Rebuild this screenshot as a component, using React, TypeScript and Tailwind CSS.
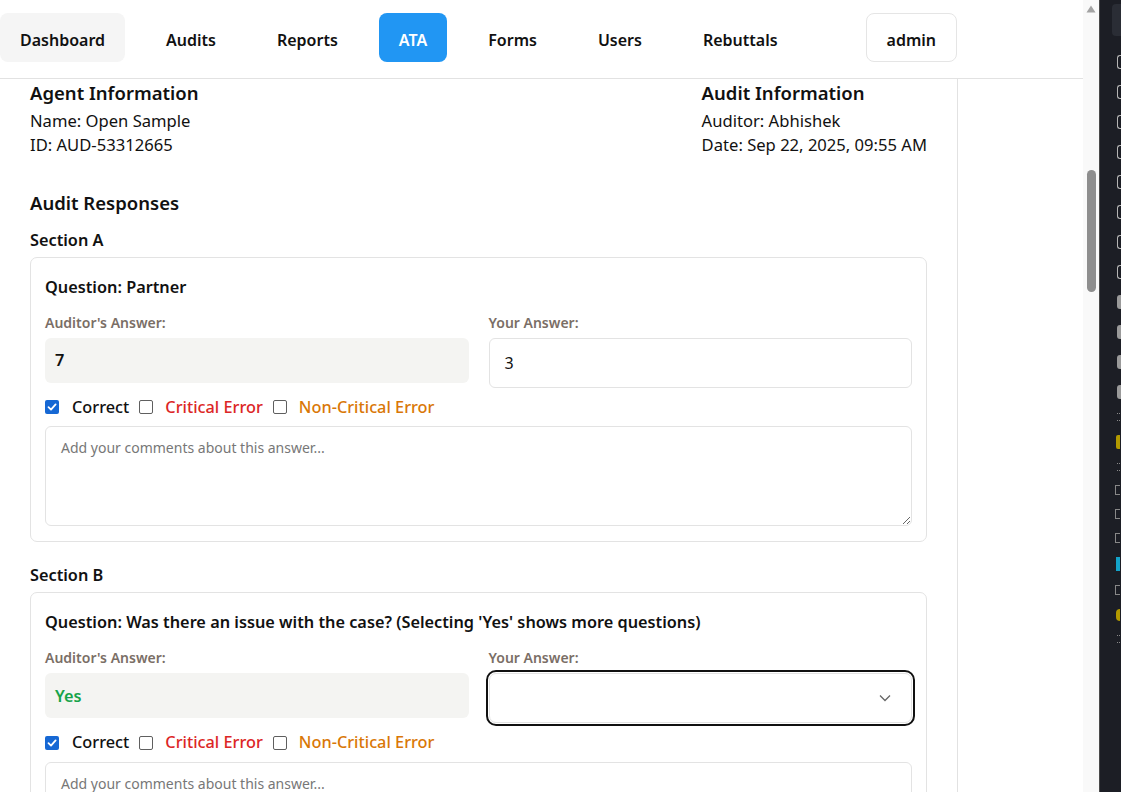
import React from 'react';

const navItems = ['Dashboard', 'Audits', 'Reports', 'ATA', 'Forms', 'Users', 'Rebuttals'];

const Box = ({ checked }: { checked?: boolean }) =>
  checked ? (
    <span className="flex h-[14px] w-[14px] shrink-0 items-center justify-center rounded-[2px] bg-[#1668d4]">
      <svg width="10" height="10" viewBox="0 0 10 10" fill="none">
        <path d="M1.5 5.2 L4 7.6 L8.6 2.4" stroke="white" strokeWidth="1.8" strokeLinecap="round" strokeLinejoin="round" />
      </svg>
    </span>
  ) : (
    <span className="block h-[14px] w-[14px] shrink-0 rounded-[2px] border border-[#5f5f5f] bg-white" />
  );

const Marks = () => (
  <div className="flex items-center text-[16.3px] font-medium">
    <Box checked />
    <span className="ml-[13px] text-[#111]">Correct</span>
    <span className="ml-[10px]"><Box /></span>
    <span className="ml-[12px] text-[#dc2626]">Critical Error</span>
    <span className="ml-[10px]"><Box /></span>
    <span className="ml-[12px] text-[#d97706]">Non-Critical Error</span>
  </div>
);

const Comment = () => (
  <textarea
    className="mt-[7px] block h-[100px] w-full resize-y rounded-[6px] border border-[#e3e3e3] px-[15px] py-[10px] text-[14px] text-[#333] outline-none placeholder:text-[#777]"
    placeholder="Add your comments about this answer..."
  />
);

const Question = ({
  title,
  auditor,
  auditorClass,
  yours,
}: {
  title: string;
  auditor: string;
  auditorClass: string;
  yours: React.ReactNode;
}) => (
  <div className="rounded-[7px] border border-[#e3e3e3] px-[14px] pt-[17px] pb-[15px]">
    <div className="text-[16.3px] font-semibold leading-[24px] text-[#111]">{title}</div>
    <div className="mt-[14px] grid grid-cols-2 gap-[20px]">
      <div>
        <div className="text-[14px] font-semibold leading-[20px] text-[#7a6e66]">Auditor's Answer:</div>
        <div className={`mt-[5px] flex h-[45px] items-center rounded-[6px] bg-[#f4f4f2] px-[10px] text-[16.3px] font-semibold ${auditorClass}`}>
          {auditor}
        </div>
      </div>
      <div>
        <div className="text-[14px] font-semibold leading-[20px] text-[#7a6e66]">Your Answer:</div>
        <div className="mt-[5px]">{yours}</div>
      </div>
    </div>
    <div className="mt-[7px]"><Marks /></div>
    <Comment />
  </div>
);

export default function App() {
  return (
    <div className="flex h-[792px] w-[1121px] overflow-hidden bg-white text-[#111]" style={{ fontFamily: '"Noto Sans", "Open Sans", sans-serif' }}>
      <div className="flex w-[1083px] flex-col">
        <nav className="border-b border-[#e2e2e2]">
          <div className="flex h-[78px] w-[957px] items-center justify-between pb-[3px]">
            <div className="flex gap-[21px]">
              {navItems.map((n) => (
                <div
                  key={n}
                  className={
                    'flex h-[49px] items-center rounded-[8px] px-[20px] pt-[4px] text-[16px] font-semibold ' +
                    (n === 'Dashboard' ? 'bg-[#f5f5f5] ' : '') +
                    (n === 'ATA' ? 'bg-[#2196f3] text-white ' : 'text-[#111]')
                  }
                >
                  {n}
                </div>
              ))}
            </div>
            <div className="flex h-[49px] items-center rounded-[8px] border border-[#e5e5e5] px-[20px] pt-[4px] text-[16px] font-semibold">admin</div>
          </div>
        </nav>
        <div className="w-[958px] flex-1 border-r border-[#e2e2e2] pl-[30px] pr-[30px]">
          <div className="mt-[1px] flex justify-between">
            <div>
              <h2 className="text-[18.5px] font-semibold leading-[26px]">Agent Information</h2>
              <div className="mt-[2px] text-[16.6px] leading-[25px]">Name: Open Sample</div>
              <div className="text-[16.6px] leading-[24px]">ID: AUD-53312665</div>
            </div>
            <div>
              <h2 className="text-[18.5px] font-semibold leading-[26px]">Audit Information</h2>
              <div className="mt-[2px] text-[16.6px] leading-[25px]">Auditor: Abhishek</div>
              <div className="text-[16.6px] leading-[24px]">Date: Sep 22, 2025, 09:55 AM</div>
            </div>
          </div>
          <h2 className="mt-[33px] text-[18.5px] font-semibold leading-[26px]">Audit Responses</h2>
          <h3 className="mt-[12px] mb-[5px] text-[16.3px] font-semibold leading-[24px]">Section A</h3>
          <Question
            title="Question: Partner"
            auditor="7"
            auditorClass="text-[#111]"
            yours={
              <div className="flex h-[50px] items-center rounded-[6px] border border-[#e3e3e3] px-[15px] text-[16px]">3</div>
            }
          />
          <h3 className="mt-[21px] mb-[5px] text-[16.3px] font-semibold leading-[24px]">Section B</h3>
          <Question
            title="Question: Was there an issue with the case? (Selecting 'Yes' shows more questions)"
            auditor="Yes"
            auditorClass="text-[#16a34a]"
            yours={
              <div className="flex h-[50px] items-center justify-end rounded-[7px] border border-[#e3e3e3] pr-[20px] outline-2 outline-offset-1 outline-[#111]">
                <svg width="12" height="8" viewBox="0 0 12 8" fill="none">
                  <path d="M1 1.5 L6 6.5 L11 1.5" stroke="#666" strokeWidth="1.3" />
                </svg>
              </div>
            }
          />
        </div>
      </div>
      {/* scrollbar */}
      <div className="flex w-[16px] flex-col items-center bg-[#f9f9f9]">
        <svg className="mt-[5px]" width="10" height="8" viewBox="0 0 10 8">
          <path d="M5 0.5 L9.5 7.5 L0.5 7.5 Z" fill="#a3a3a3" />
        </svg>
        <div className="mt-[157px] h-[122px] w-[9px] rounded-full bg-[#8e8e8e]" />
      </div>
      {/* dark side panel */}
      <div className="flex flex-1 flex-col items-end border-l border-[#4a4a4a] bg-[#1c1e25] pt-[4px]">
        <div className="h-[32px] w-[9px] rounded-l-[4px] bg-[#2a2d35]" />
        <div className="mt-[19px] flex flex-col gap-[16px]">
          {Array.from({ length: 8 }).map((_, i) => (
            <div key={i} className="h-[14px] w-[4px] rounded-l-[3px] border border-r-0 border-[#b5b5b5]" />
          ))}
          {Array.from({ length: 4 }).map((_, i) => (
            <div key={'f' + i} className="h-[14px] w-[4px] rounded-l-[3px] bg-[#9a9a9a]" />
          ))}
        </div>
        <div className="mt-[14px] flex flex-col items-end gap-[14px] pr-[1px]">
          <div className="h-[8px] w-[3px] border-y border-dotted border-[#888]" />
          <div className="h-[14px] w-[4px] rounded-l-[2px] bg-[#b39a00]" />
          <div className="h-[8px] w-[3px] border-y border-dotted border-[#888]" />
          <div className="h-[10px] w-[5px] border border-r-0 border-[#888]" />
          <div className="h-[10px] w-[5px] border border-r-0 border-[#888]" />
          <div className="h-[10px] w-[5px] border border-r-0 border-[#888]" />
          <div className="h-[14px] w-[4px] bg-[#13a3c9]" />
          <div className="h-[10px] w-[5px] border border-r-0 border-[#888]" />
          <div className="h-[12px] w-[4px] rounded-l-full bg-[#b39a00]" />
          <div className="h-[8px] w-[3px] border-y border-dotted border-[#888]" />
        </div>
      </div>
    </div>
  );
}
